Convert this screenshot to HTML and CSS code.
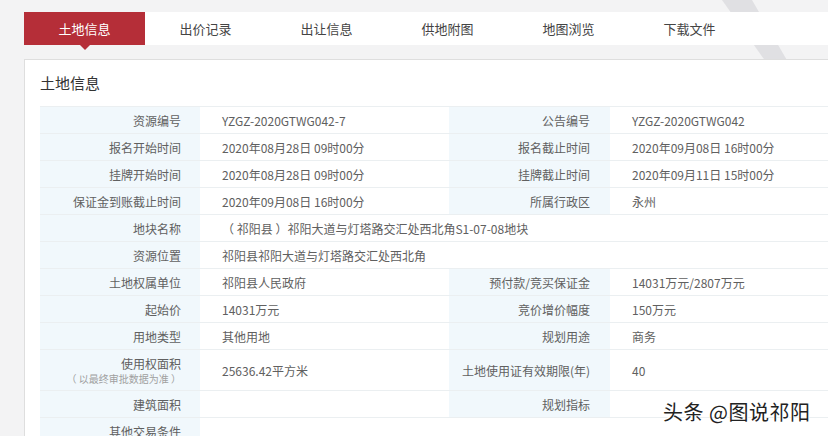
FILE: index.html
```html
<!DOCTYPE html>
<html lang="zh-CN">
<head>
    <meta charset="UTF-8">
    <title>土地信息</title>
    <link rel="stylesheet" href="styles.css">
</head>
<body>
    <svg class="deco" width="120" height="70" viewBox="0 0 120 70">
        <polygon points="22,0 52,0 88,62 66,62" fill="#e0e0e3"/>
    </svg>

    <nav class="tabs">
        <a class="tab active" href="#">土地信息</a>
        <a class="tab" href="#">出价记录</a>
        <a class="tab" href="#">出让信息</a>
        <a class="tab" href="#">供地附图</a>
        <a class="tab" href="#">地图浏览</a>
        <a class="tab" href="#">下载文件</a>
    </nav>

    <div class="panel">
        <h2 class="panel-title">土地信息</h2>
        <table class="info-table">
            <tr>
                <th>资源编号</th><td>YZGZ-2020GTWG042-7</td>
                <th>公告编号</th><td>YZGZ-2020GTWG042</td>
            </tr>
            <tr>
                <th>报名开始时间</th><td>2020年08月28日 09时00分</td>
                <th>报名截止时间</th><td>2020年09月08日 16时00分</td>
            </tr>
            <tr>
                <th>挂牌开始时间</th><td>2020年08月28日 09时00分</td>
                <th>挂牌截止时间</th><td>2020年09月11日 15时00分</td>
            </tr>
            <tr>
                <th>保证金到账截止时间</th><td>2020年09月08日 16时00分</td>
                <th>所属行政区</th><td>永州</td>
            </tr>
            <tr>
                <th>地块名称</th><td colspan="3">（ 祁阳县 ）祁阳大道与灯塔路交汇处西北角S1-07-08地块</td>
            </tr>
            <tr>
                <th>资源位置</th><td colspan="3">祁阳县祁阳大道与灯塔路交汇处西北角</td>
            </tr>
            <tr>
                <th>土地权属单位</th><td>祁阳县人民政府</td>
                <th>预付款/竞买保证金</th><td>14031万元/2807万元</td>
            </tr>
            <tr>
                <th>起始价</th><td>14031万元</td>
                <th>竞价增价幅度</th><td>150万元</td>
            </tr>
            <tr>
                <th>用地类型</th><td>其他用地</td>
                <th>规划用途</th><td>商务</td>
            </tr>
            <tr class="tall">
                <th>使用权面积<span class="note">（ 以最终审批数据为准 ）</span></th><td>25636.42平方米</td>
                <th>土地使用证有效期限(年)</th><td>40</td>
            </tr>
            <tr>
                <th>建筑面积</th><td></td>
                <th>规划指标</th><td></td>
            </tr>
            <tr>
                <th>其他交易条件</th><td colspan="3"></td>
            </tr>
        </table>
    </div>

    <div class="watermark">头条 @图说祁阳</div>
</body>
</html>
```

FILE: styles.css
```css
* {
    margin: 0;
    padding: 0;
    box-sizing: border-box;
}

body {
    background-color: #f3f3f4;
    font-family: "Noto Sans CJK SC", "Noto Sans", sans-serif;
    color: #555;
    overflow: hidden;
    position: relative;
}

.deco {
    position: absolute;
    top: 0;
    left: 700px;
}

.tabs {
    position: relative;
    display: flex;
    margin: 12px 0 0 24px;
    height: 33px;
    background-color: #fff;
}

.tab {
    position: relative;
    width: 121px;
    line-height: 33px;
    text-align: center;
    font-size: 13px;
    color: #444;
    text-decoration: none;
}

.tab.active {
    background-color: #b52e38;
    color: #fff;
}

.tab.active::after {
    content: "";
    position: absolute;
    left: 56px;
    bottom: -5px;
    border-left: 5px solid transparent;
    border-right: 5px solid transparent;
    border-top: 5px solid #b52e38;
}

.panel {
    position: relative;
    margin: 14px -40px 0 24px;
    background-color: #fff;
    border: 1px solid #dedede;
    padding: 0 0 0 15px;
}

.panel-title {
    font-size: 15px;
    font-weight: normal;
    color: #333;
    line-height: 20px;
    padding: 13px 0 13px;
}

.info-table {
    width: 830px;
    border-collapse: collapse;
    font-size: 12px;
    table-layout: fixed;
}

.info-table th,
.info-table td {
    height: 27px;
    border-top: 1px solid #ebeff1;
    border-bottom: 1px solid #ebeff1;
    font-weight: normal;
    color: #606060;
}

.info-table th {
    width: 160px;
    background-color: #f1f8fc;
    text-align: right;
    padding-right: 19px;
}

.info-table th:nth-of-type(2) {
    width: 161px;
    padding-right: 20px;
}

.info-table td {
    text-align: left;
    padding-left: 22px;
}

.info-table td:nth-of-type(1) {
    width: 249px;
}

.info-table .tall th,
.info-table .tall td {
    height: 41px;
}

.note {
    display: block;
    font-size: 10px;
    color: #a0a0a0;
    line-height: 14px;
}

.watermark {
    position: absolute;
    left: 663px;
    top: 397px;
    font-size: 20px;
    color: #222;
    text-shadow: 1px 1px 0 #fff, -1px -1px 0 #fff;
    letter-spacing: 0.5px;
}
```
